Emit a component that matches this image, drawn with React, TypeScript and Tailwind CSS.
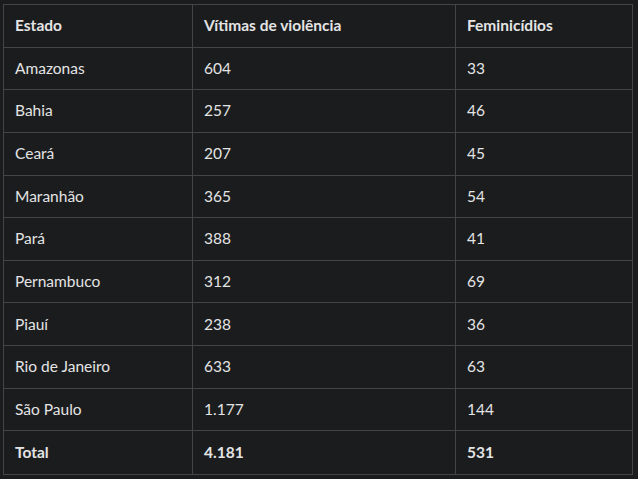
const rows = [
  ['Amazonas', '604', '33'],
  ['Bahia', '257', '46'],
  ['Ceará', '207', '45'],
  ['Maranhão', '365', '54'],
  ['Pará', '388', '41'],
  ['Pernambuco', '312', '69'],
  ['Piauí', '238', '36'],
  ['Rio de Janeiro', '633', '63'],
  ['São Paulo', '1.177', '144'],
];

const Row = ({ cells, bold }: { cells: string[]; bold?: boolean }) => (
  <div className="grid grid-cols-[188px_263px_1fr] h-[42.64px] border-b border-[#444546] last:border-b-0">
    {cells.map((c, i) => (
      <div
        key={i}
        className={`flex items-center pl-[11px] ${i > 0 ? 'border-l border-[#444546]' : ''} ${bold ? 'font-bold' : ''}`}
      >
        {c}
      </div>
    ))}
  </div>
);

export default function App() {
  return (
    <div
      className="w-[638px] h-[479px] bg-[#1b1c1e] pt-[4px] pl-[3px] text-[15.5px] text-[#e4e4e4]"
      style={{ fontFamily: 'Lato, "Noto Sans", sans-serif' }}
    >
      <div className="w-[630px] border border-[#444546] flex flex-col">
        <Row cells={['Estado', 'Vítimas de violência', 'Feminicídios']} bold />
        {rows.map((r) => (
          <Row key={r[0]} cells={r} />
        ))}
        <Row cells={['Total', '4.181', '531']} bold />
      </div>
    </div>
  );
}
